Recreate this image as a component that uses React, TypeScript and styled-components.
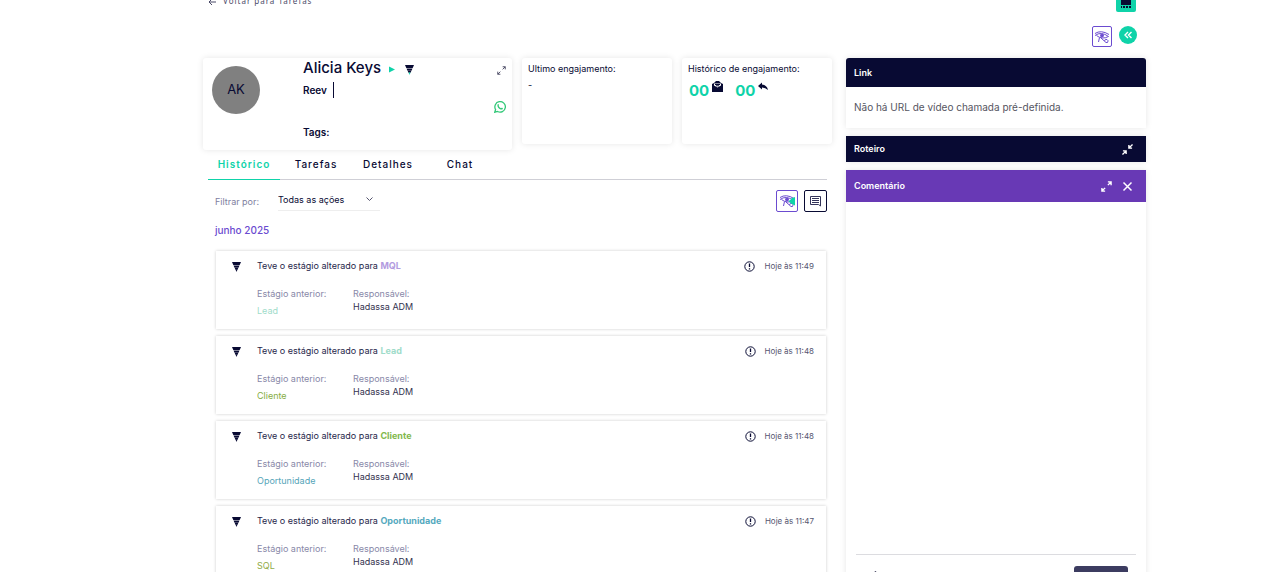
import React from 'react';
import styled, { createGlobalStyle } from 'styled-components';

const navy = '#080a33';
const teal = '#0fd3a9';
const purple = '#6b4bd0';

const Global = createGlobalStyle`
  * { box-sizing: border-box; }
  body { margin: 0; background: #fff; color: ${navy}; font: 10px/16px Inter, "Liberation Sans", sans-serif; }
  button, select, textarea { font: inherit; color: inherit; }
  button { padding: 0; cursor: pointer; }
  svg { display: block; flex: none; }
  h1, h2, p, dl, dd, ul { margin: 0; padding: 0; }
`;

const Viewport = styled.div`
  height: 100vh;
  overflow: hidden;
`;
const Page = styled.div`
  padding: 0 126px 0 203px;
`;
const TopBar = styled.header`
  display: flex;
  justify-content: space-between;
  height: 20px;
  margin-top: -8px;
  padding: 0 10px 0 5px;
`;
const BackLink = styled.a`
  display: flex;
  align-items: center;
  gap: 6px;
  height: 18px;
  color: #4a4a68;
  text-decoration: none;
  font: 8px/16px "Noto Sans", sans-serif;
  letter-spacing: 1px;
`;
const CalendarButton = styled.button`
  display: grid;
  place-items: center;
  width: 20px;
  height: 20px;
  border: 0;
  border-radius: 2px;
  background: ${teal};
`;
const Actions = styled.div`
  display: flex;
  justify-content: flex-end;
  gap: 7px;
  height: 32px;
  margin-top: 14px;
  padding-right: 9px;
`;
const SquareButton = styled.button<{ $color: string; $width: number; $height: number }>`
  display: grid;
  place-items: center;
  width: ${p => p.$width}px;
  height: ${p => p.$height}px;
  border: 1px solid ${p => p.$color};
  border-radius: 2px;
  background: #fff;
`;
const RoundButton = styled.button`
  display: grid;
  place-items: center;
  width: 18px;
  height: 18px;
  border: 0;
  border-radius: 50%;
  background: ${teal};
`;
const Columns = styled.div`
  display: grid;
  grid-template-columns: minmax(0, 1fr) 300px;
  gap: 14px;
  align-items: start;
`;
const Summary = styled.div`
  display: grid;
  grid-template-columns: minmax(0, 1fr) 150px 150px;
  gap: 10px;
  align-items: start;
`;
const Card = styled.section`
  border-radius: 3px;
  background: #fff;
  box-shadow: 0 0 6px rgba(0, 0, 0, 0.1);
`;
const Profile = styled(Card)`
  display: flex;
  min-height: 92px;
  padding: 0 6px 0 9px;
`;
const Avatar = styled.div`
  display: grid;
  place-items: center;
  width: 48px;
  height: 48px;
  margin: 8px 43px 0 0;
  padding-bottom: 2px;
  border-radius: 50%;
  background: #808080;
  font-size: 13px;
`;
const ProfileText = styled.div`
  flex: 1;
`;
const NameRow = styled.div`
  display: flex;
  align-items: center;
  height: 22px;
  gap: 8px;
`;
const Name = styled.h1`
  padding-bottom: 2px;
  font-size: 15px;
  line-height: 20px;
  font-weight: 500;
`;
const Company = styled.p`
  display: inline-block;
  margin-top: 2px;
  padding-right: 6px;
  border-right: 1px solid ${navy};
  font-weight: 600;
`;
const Tags = styled.p`
  margin-top: 26px;
  font-size: 10px;
  font-weight: 600;
`;
const ProfileIcons = styled.div`
  display: flex;
  flex-direction: column;
  align-items: flex-end;
  gap: 26px;
  padding-top: 8px;
`;
const PlainButton = styled.button`
  border: 0;
  background: none;
`;
const Stat = styled(Card)`
  min-height: 86px;
  padding: 3px 6px;
  font-size: 9px;
`;
const StatTitle = styled.h2`
  font: inherit;
  white-space: nowrap;
`;
const Counters = styled.div`
  display: flex;
  gap: 12px;
  margin-top: 3px;
  padding-left: 1px;
`;
const Counter = styled.span`
  display: flex;
  gap: 3px;
  padding-top: 1px;
  color: ${teal};
  font-size: 15px;
  line-height: 20px;
  font-weight: 700;
`;
const Tabs = styled.nav`
  display: flex;
  height: 30px;
  margin: 0 5px;
  border-bottom: 1px solid #cfcfd6;
`;
const Tab = styled.button<{ $active?: boolean }>`
  width: 72px;
  height: 30px;
  padding-bottom: 2px;
  border: 0;
  border-bottom: 1px solid ${p => (p.$active ? teal : 'transparent')};
  background: none;
  color: ${p => (p.$active ? teal : navy)};
  font-weight: ${p => (p.$active ? 600 : 500)};
  letter-spacing: 1px;
`;
const History = styled.div`
  padding: 10px 5px 0 12px;
`;
const FilterRow = styled.div`
  display: flex;
  height: 24px;
`;
const FilterLabel = styled.label`
  width: 63px;
  padding-top: 4px;
  color: #8080a0;
  font-size: 9px;
`;
const SelectWrap = styled.div`
  display: flex;
  align-items: center;
  width: 102px;
  height: 21px;
  margin-right: auto;
  padding-right: 7px;
  border-bottom: 1px solid #eee;
`;
const Select = styled.select`
  flex: 1;
  min-width: 0;
  padding: 0;
  border: 0;
  appearance: none;
  background: none;
  font-size: 9px;
`;
const Tools = styled.div`
  display: flex;
  gap: 6px;
`;
const Month = styled.h2`
  margin: 8px 0 13px;
  color: ${purple};
  font-size: 10px;
  line-height: 16px;
  font-weight: 500;
`;
const List = styled.ul`
  display: grid;
  gap: 7px;
  padding: 0 1px;
  list-style: none;
`;
const Item = styled.li`
  display: grid;
  grid-template-columns: 41px minmax(0, 1fr) auto;
  height: 78px;
  padding: 7px 12px 0 0;
  background: #fff;
  box-shadow: 0 0 3px rgba(0, 0, 0, 0.2);
  color: #26264a;
  font-size: 9px;
`;
const ItemIcon = styled.span`
  padding: 3px 0 0 16px;
`;
const Stage = styled.span<{ $color: string; $bold?: boolean }>`
  color: ${p => p.$color};
  font-weight: ${p => (p.$bold ? 700 : 400)};
`;
const Details = styled.dl`
  display: grid;
  grid-template-columns: 96px 1fr;
  margin-top: 13px;
`;
const Term = styled.dt`
  height: 14px;
  line-height: 14px;
  color: #8888a8;
`;
const Previous = styled.dd`
  padding-top: 2px;
`;
const Owner = styled.dd`
  line-height: 12px;
  color: #33334f;
`;
const Time = styled.span`
  display: flex;
  align-items: center;
  gap: 9px;
  height: 16px;
  color: #55556f;
  font-size: 8px;
`;
const Side = styled.aside`
  display: grid;
  gap: 8px;
`;
const Panel = styled(Card)`
  overflow: hidden;
  border-radius: 0;
  &:first-child { border-radius: 3px 3px 0 0; }
`;
const PanelHead = styled.div<{ $height: number; $color?: string }>`
  display: flex;
  align-items: center;
  gap: 10px;
  height: ${p => p.$height}px;
  padding: 0 13px 0 8px;
  background: ${p => p.$color || navy};
  color: #fff;
`;
const PanelTitle = styled.h2`
  flex: 1;
  font-size: 9px;
  line-height: 16px;
  font-weight: 600;
`;
const PanelText = styled.p`
  padding: 12px 8px 13px;
  color: #55555f;
`;
const Comment = styled.textarea`
  display: block;
  width: calc(100% - 20px);
  height: 353px;
  margin: 0 10px;
  padding: 8px 0;
  border: 0;
  border-bottom: 1px solid #dcdce0;
  resize: none;
  outline: none;
`;
const CommentFoot = styled.div`
  display: flex;
  justify-content: space-between;
  padding: 11px 18px 12px 28px;
`;
const Save = styled.button`
  width: 54px;
  height: 24px;
  border: 0;
  border-radius: 3px;
  background: #3c3c60;
`;

const HorusEye = ({ camera = false }: { camera?: boolean }) => (
  <svg width="16" height="14" viewBox="0 0 16 14" fill="none" stroke={purple}>
    <path d="M1 3.500Q7 -.5 15 4.500M1 5.500Q7 1 14.500 6.500Q8 10 2.500 5.500" />
    <circle cx="8" cy="5.500" r="1.500" fill={purple} />
    <path d="M5.500 7.500 4.500 12M7 8 12 12.500H13.500Q15 10.500 13 9.500T10.500 11" />
    {camera && <path d="M9.500 7 12 5.500V4.500L16 3V11.500L12 9.500Z" fill={teal} stroke="none" />}
  </svg>
);
const Funnel = ({ tip = navy }: { tip?: string }) => (
  <svg width="9" height="11" viewBox="0 0 9 11">
    <path d="M0 1H9L7.700 4H1.300ZM1.500 4.400H7.500L6.500 6.800H2.500ZM2.700 7.100H6.300L5.500 8.800H3.500Z" fill={navy} />
    <path d="M3.500 8.600H5.500L4.500 11Z" fill={tip} />
  </svg>
);
const Resize = ({ inward = false, color = '#fff', size = 11, stroke = 1.5 }: { inward?: boolean; color?: string; size?: number; stroke?: number }) => (
  <svg width={size} height={size} viewBox="0 0 12 12" fill="none" stroke={color} strokeWidth={stroke}>
    {inward
      ? <path d="M7.500 1V4.500H11M7.500 4.500 11.500 .5M1 7.500H4.500V11M4.500 7.500 .5 11.500" />
      : <path d="M7.500 1H11V4.500M7.500 4.500 11 1M1 7.500V11H4.500M1 11 4.500 7.500" />}
  </svg>
);
const WhatsApp = () => (
  <svg width="12" height="12" viewBox="0 0 24 24" fill="none" stroke="#32c878" strokeWidth="2.6">
    <path d="M1.5 22.5 3.2 17A10.5 10.5 0 1 1 7.2 20.9Z" />
    <path d="M7.4 6.6c.9-1 1.8-.6 2.3.8.6 1.3-.2 1.6-.5 2.2 1 2.3 2.6 3.8 4.8 4.7.8-.5 1-1.5 2.3-.8 1.5.7 1.9 1.2 1.1 2.4-1.1 1.6-3.2 1.9-6.3 0C7.7 13.6 5.6 10 7.4 6.6Z" fill="#32c878" stroke="none" />
  </svg>
);

const rows = [
  { stage: 'MQL', color: '#b29be0', prev: 'Lead', prevColor: '#9fdcca', time: '11:49' },
  { stage: 'Lead', color: '#9fdcca', prev: 'Cliente', prevColor: '#86ad43', time: '11:48' },
  { stage: 'Cliente', color: '#81b84c', prev: 'Oportunidade', prevColor: '#55a5b9', time: '11:48' },
  { stage: 'Oportunidade', color: '#55a9be', prev: 'SQL', prevColor: '#91ab48', time: '11:47' },
];

export default function App() {
  return (
    <Viewport>
      <Global />
      <Page>
        <TopBar>
          <BackLink href="#tarefas">
            <svg width="9" height="9" viewBox="0 0 9 9" fill="none" stroke="#4a4a68"><path d="M8 5H1M4 2 1 5 4 8" /></svg>
            Voltar para Tarefas
          </BackLink>
          <CalendarButton aria-label="Calendário">
            <svg width="10" height="14" viewBox="0 0 10 14"><path d="M0 0H10V10H0ZM0 11H1V13H0ZM2 11H4V13H2ZM5 11H7V13H5ZM8 11H10V13H8Z" fill={navy} /></svg>
          </CalendarButton>
        </TopBar>
        <Actions>
          <SquareButton $color={purple} $width={20} $height={21} aria-label="Visualizar"><HorusEye /></SquareButton>
          <RoundButton aria-label="Recolher">
            <svg width="8" height="8" viewBox="0 0 8 8" fill="none" stroke="#fff" strokeWidth="1.4"><path d="M4 1 1 4 4 7M7.5 1 4.5 4 7.5 7" /></svg>
          </RoundButton>
        </Actions>
        <Columns>
          <main>
            <Summary>
              <Profile>
                <Avatar>AK</Avatar>
                <ProfileText>
                  <NameRow>
                    <Name>Alicia Keys</Name>
                    <svg width="8" height="8" viewBox="0 0 8 8"><path d="M0 1.500 6 4.500 0 7.500Z" fill={teal} /></svg>
                    <Funnel tip={teal} />
                  </NameRow>
                  <Company>Reev</Company>
                  <Tags>Tags:</Tags>
                </ProfileText>
                <ProfileIcons>
                  <PlainButton aria-label="Expandir"><Resize color="#44445f" size={9} stroke={1.2} /></PlainButton>
                  <PlainButton aria-label="WhatsApp"><WhatsApp /></PlainButton>
                </ProfileIcons>
              </Profile>
              <Stat>
                <StatTitle>Ultimo engajamento:</StatTitle>
                <p>-</p>
              </Stat>
              <Stat>
                <StatTitle>Histórico de engajamento:</StatTitle>
                <Counters>
                  <Counter>00
                    <svg width="11" height="12" viewBox="0 0 11 12"><path d="M0 3 2 2 4 0H7L9 2 11 3V11H0Z" fill={navy} /><path d="M2 2.500H9V4.500L5.500 6.500 2 4.500Z" fill="#fff" /><path d="M3 3.500H8M4 4.800H7" stroke={navy} /></svg>
                  </Counter>
                  <Counter>00
                    <svg width="10" height="12" viewBox="0 0 10 12"><path d="M0 5 4 1.5V3.5Q9 4 10 9 7.5 6.5 4 6.5V8.5Z" fill={navy} /></svg>
                  </Counter>
                </Counters>
              </Stat>
            </Summary>
            <Tabs>
              <Tab $active>Histórico</Tab>
              <Tab>Tarefas</Tab>
              <Tab>Detalhes</Tab>
              <Tab>Chat</Tab>
            </Tabs>
            <History>
              <FilterRow>
                <FilterLabel htmlFor="filtro">Filtrar por:</FilterLabel>
                <SelectWrap>
                  <Select id="filtro"><option>Todas as ações</option></Select>
                  <svg width="7" height="9" viewBox="0 0 7 9" fill="none" stroke="#55556e"><path d="M.5 1.5 3.5 4.5 6.5 1.5" /></svg>
                </SelectWrap>
                <Tools>
                  <SquareButton $color={purple} $width={22} $height={22} aria-label="Vídeo"><HorusEye camera /></SquareButton>
                  <SquareButton $color={navy} $width={23} $height={22} aria-label="Comentar">
                    <svg width="11" height="11" viewBox="0 0 11 11" fill="none" stroke="#34345a"><path d="M.5 .5H10.5V10L8.5 8.5H.5ZM2 2.5H9M2 4.5H9M2 6.5H9" /></svg>
                  </SquareButton>
                </Tools>
              </FilterRow>
              <Month>junho 2025</Month>
              <List>
                {rows.map(r => (
                  <Item key={r.stage}>
                    <ItemIcon><Funnel /></ItemIcon>
                    <div>
                      <p>Teve o estágio alterado para <Stage $color={r.color} $bold>{r.stage}</Stage></p>
                      <Details>
                        <div><Term>Estágio anterior:</Term><Previous><Stage $color={r.prevColor}>{r.prev}</Stage></Previous></div>
                        <div><Term>Responsável:</Term><Owner>Hadassa ADM</Owner></div>
                      </Details>
                    </div>
                    <Time>
                      <svg width="11" height="11" viewBox="0 0 11 11" fill="none" stroke={navy}><circle cx="5.5" cy="5.5" r="4.7" /><path d="M5.5 2.5V6M5.5 7.3V8.4" strokeWidth="1.3" /></svg>
                      Hoje às {r.time}
                    </Time>
                  </Item>
                ))}
              </List>
            </History>
          </main>
          <Side>
            <Panel>
              <PanelHead $height={29}><PanelTitle>Link</PanelTitle></PanelHead>
              <PanelText>Não há URL de vídeo chamada pré-definida.</PanelText>
            </Panel>
            <Panel>
              <PanelHead $height={26}>
                <PanelTitle>Roteiro</PanelTitle>
                <PlainButton aria-label="Recolher roteiro"><Resize inward /></PlainButton>
              </PanelHead>
            </Panel>
            <Panel>
              <PanelHead $height={32} $color="#6839b5">
                <PanelTitle as="label" htmlFor="comentario">Comentário</PanelTitle>
                <PlainButton aria-label="Expandir comentário"><Resize /></PlainButton>
                <PlainButton aria-label="Fechar">
                  <svg width="11" height="11" viewBox="0 0 11 11" stroke="#fff" strokeWidth="1.5"><path d="M1.5 1.5 9.5 9.5M9.5 1.5 1.5 9.5" /></svg>
                </PlainButton>
              </PanelHead>
              <Comment id="comentario" />
              <CommentFoot>
                <svg width="3" height="9" viewBox="0 0 3 9"><path d="M0 7 1 5H2.5L1 7Z" fill="#55556e" /></svg>
                <Save aria-label="Salvar" />
              </CommentFoot>
            </Panel>
          </Side>
        </Columns>
      </Page>
    </Viewport>
  );
}
